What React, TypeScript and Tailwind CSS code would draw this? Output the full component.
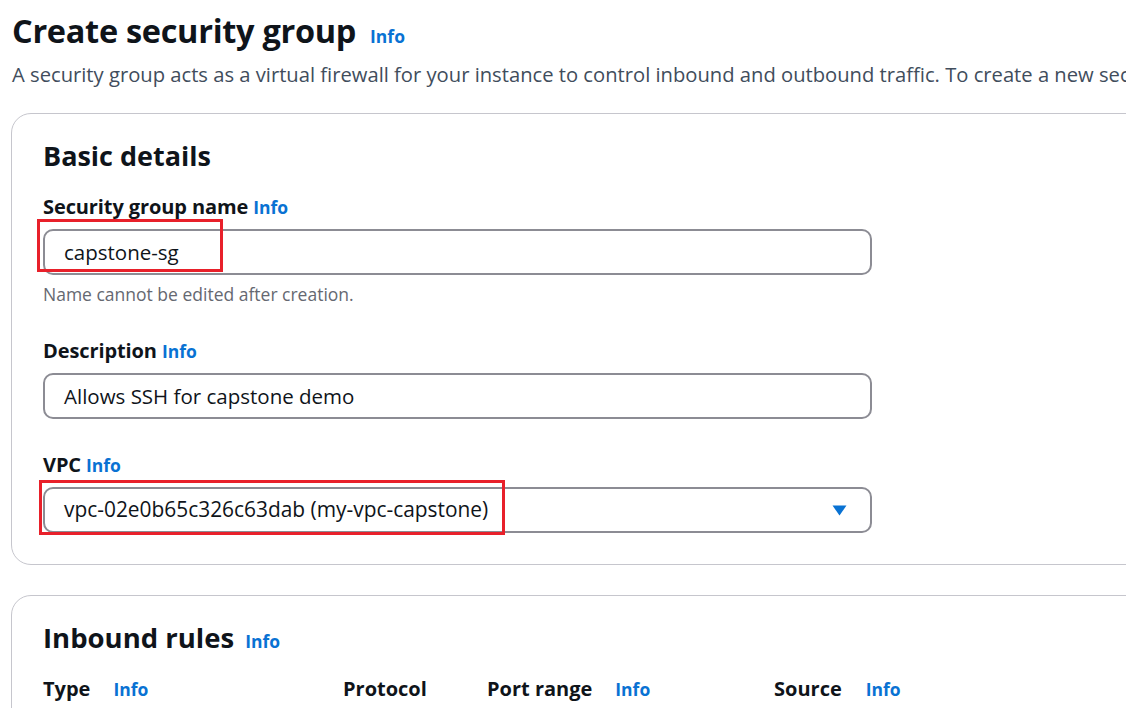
import React from 'react';

function InfoLink({ className = '' }: { className?: string }) {
    return <a className={`text-[#0972d3] font-bold text-[17.5px] ${className}`}>Info</a>;
}

function Field({ label, children }: { label: string; children: React.ReactNode }) {
    return (
        <div>
            <div className="flex items-baseline gap-[5px] h-[28px] leading-[28px]">
                <span className="text-[20px] font-bold text-[#0f141a] tracking-[-0.1px]">{label}</span>
                <InfoLink />
            </div>
            {children}
        </div>
    );
}

export default function App() {
    return (
        <div
            className="w-[1126px] h-[708px] overflow-hidden bg-white text-[#0f141a]"
            style={{ fontFamily: '"Open Sans", "Noto Sans", sans-serif' }}
        >
            {/* Header */}
            <div className="pl-[12px] pt-[8px]">
                <div className="flex items-baseline gap-[14px] h-[46px]">
                    <h1 className="text-[32.5px] font-bold leading-[46px] tracking-[-0.3px]">Create security group</h1>
                    <InfoLink />
                </div>
                <p className="text-[20.2px] text-[#414d5c] whitespace-nowrap mt-[6px] leading-[28px]">
                    A security group acts as a virtual firewall for your instance to control inbound and outbound traffic. To create a new security group, complete the fields below.
                </p>
            </div>

            {/* Basic details card */}
            <div className="ml-[11px] mt-[25px] w-[1200px] h-[452px] border border-[#c6c6cd] rounded-[20px] pl-[31px] pt-[25px]">
                <h2 className="text-[27px] font-bold leading-[34px]">Basic details</h2>
                <div className="mt-[20px]">
                    <Field label="Security group name">
                        <div className="relative mt-[8px]">
                            <div className="w-[829px] h-[46px] border-2 border-[#8c8c94] rounded-[10px] flex items-center pl-[19px] text-[20.5px]">
                                capstone-sg
                            </div>
                            <div className="absolute left-[-6px] top-[-10px] w-[186px] h-[53px] border-[3px] border-[#e8202a]" />
                        </div>
                        <p className="text-[17.5px] text-[#656871] mt-[7px] leading-[24px]">Name cannot be edited after creation.</p>
                    </Field>
                </div>
                <div className="mt-[31px]">
                    <Field label="Description">
                        <div className="mt-[8px] w-[829px] h-[46px] border-2 border-[#8c8c94] rounded-[10px] flex items-center pl-[19px] text-[20.5px]">
                            Allows SSH for capstone demo
                        </div>
                    </Field>
                </div>
                <div className="mt-[32px]">
                    <Field label="VPC">
                        <div className="relative mt-[8px]">
                            <div className="w-[829px] h-[46px] border-2 border-[#8c8c94] rounded-[10px] flex items-center justify-between pl-[19px] pr-[23px] text-[20.9px]">
                                <span>vpc-02e0b65c326c63dab (my-vpc-capstone)</span>
                                <svg width="15" height="11" viewBox="0 0 15 11">
                                    <path d="M0.5 0.5h14L7.5 10.5z" fill="#0972d3" />
                                </svg>
                            </div>
                            <div className="absolute left-[-4px] top-[-7px] w-[466px] h-[55px] border-[3px] border-[#e8202a]" />
                        </div>
                    </Field>
                </div>
            </div>

            {/* Inbound rules card */}
            <div className="ml-[11px] mt-[30px] w-[1200px] h-[200px] border border-[#c6c6cd] rounded-[20px] pl-[31px] pt-[25px]">
                <div className="flex items-baseline gap-[11px]">
                    <h2 className="text-[27.5px] font-bold leading-[34px]">Inbound rules</h2>
                    <InfoLink />
                </div>
                <div className="flex items-baseline mt-[20px] text-[20px] font-bold leading-[28px]">
                    <div className="w-[300px] flex items-baseline gap-[23px]">
                        <span>Type</span>
                        <InfoLink />
                    </div>
                    <div className="w-[144px]">Protocol</div>
                    <div className="w-[287px] flex items-baseline gap-[23px]">
                        <span>Port range</span>
                        <InfoLink />
                    </div>
                    <div className="flex items-baseline gap-[24px]">
                        <span>Source</span>
                        <InfoLink />
                    </div>
                </div>
            </div>
        </div>
    );
}
